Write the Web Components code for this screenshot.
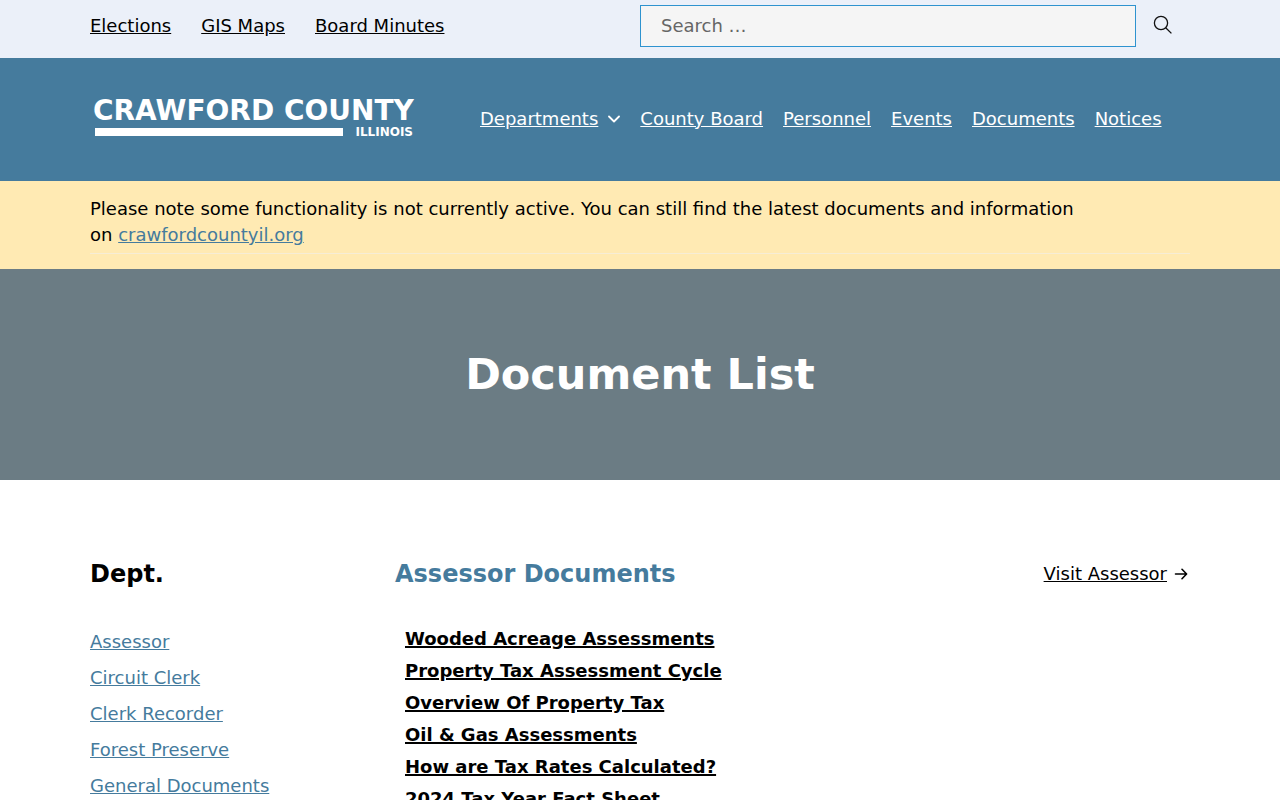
<!DOCTYPE html>
<html lang="en">
<head>
<meta charset="utf-8">
<meta name="viewport" content="width=device-width, initial-scale=1">
<title>Document List - Crawford County</title>
<style>
  body { margin: 0; font: 18px/26px "DejaVu Sans", sans-serif; color: #000; background: #fff; --brand: #457b9d; }
</style>
</head>
<body>
<county-page></county-page>

<script>
const define = (name, markup) => {
  const template = document.createElement('template');
  template.innerHTML = markup;
  customElements.define(name, class extends HTMLElement {
    constructor() {
      super();
      this.attachShadow({ mode: 'open' }).append(template.content.cloneNode(true));
    }
  });
};

define('page-container', `
<style>
  :host { display: block; max-width: 1100px; margin: 0 auto; }
</style>
<slot></slot>`);

define('search-box', `
<style>
  :host { display: block; }
  form { display: flex; align-items: center; margin: 0; }
  label { flex: 1; display: flex; }
  input { flex: 1; min-width: 0; box-sizing: border-box; height: 42px; padding: 0 20px 2px; border: 1px solid #2e93cf; border-radius: 0; background: #f5f5f5; font: inherit; color: #000; outline: none; }
  input::placeholder { color: #666; opacity: 1; }
  button { display: flex; justify-content: center; align-items: center; width: 54px; height: 42px; padding: 0 0 2px; border: 0; background: none; color: #111; }
</style>
<form role="search" onsubmit="return false">
  <label><input type="search" placeholder="Search …" aria-label="Search for"></label>
  <button type="submit" aria-label="Search">
    <svg width="20" height="20" viewBox="0 0 20 20" fill="none" stroke="currentColor" stroke-width="1.3"><circle cx="8" cy="8" r="6.6"/><path d="M12.7 12.7 18.4 18.4"/></svg>
  </button>
</form>`);

define('top-bar', `
<style>
  :host { display: block; background: #ebf0f9; }
  .row { display: grid; grid-template-columns: 1fr 1fr; align-items: center; padding: 5px 0 11px; }
  nav { display: flex; gap: 30px; }
  a { color: #000; white-space: nowrap; }
</style>
<page-container><div class="row">
  <nav aria-label="Quick links"><a href="#">Elections</a><a href="#">GIS Maps</a><a href="#">Board Minutes</a></nav>
  <search-box></search-box>
</div></page-container>`);

define('county-logo', `
<style>
  :host { display: block; }
  a { display: block; width: 330px; color: #fff; }
  svg { display: block; width: 100%; }
  text { font-family: "DejaVu Sans", sans-serif; font-weight: 700; }
</style>
<a href="#" aria-label="Crawford County Illinois">
  <svg viewBox="0 0 330 61" fill="currentColor">
    <text x="3" y="32" font-size="28">CRAWFORD COUNTY</text>
    <rect x="5" y="40" width="248" height="8"/>
    <text x="323" y="48" font-size="12" text-anchor="end">ILLINOIS</text>
  </svg>
</a>`);

define('site-header', `
<style>
  :host { display: block; background: var(--brand); }
  .row { display: flex; align-items: center; gap: 60px; padding: 30px 0 32px; }
  nav { display: flex; gap: 20px; }
  a { color: #fff; white-space: nowrap; }
  .parent { display: flex; align-items: center; gap: 10px; color: #fff; }
</style>
<page-container><div class="row">
  <county-logo></county-logo>
  <nav aria-label="Primary">
    <span class="parent"><a href="#">Departments</a><svg width="12" height="8" viewBox="0 0 12 8" fill="none" stroke="currentColor" stroke-width="1.8" stroke-linecap="round" stroke-linejoin="round"><path d="M1 1.5 6 6.5 11 1.5"/></svg></span>
    <a href="#">County Board</a><a href="#">Personnel</a><a href="#">Events</a><a href="#">Documents</a><a href="#">Notices</a>
  </nav>
</div></page-container>`);

define('site-notice', `
<style>
  :host { display: block; background: #ffeab3; padding: 15px 0; }
  .text { padding-bottom: 5px; border-bottom: 1px solid #f6edd6; }
  p { margin: 0; max-width: 1000px; }
  ::slotted(a) { color: var(--brand); }
</style>
<page-container><div class="text"><p><slot></slot></p></div></page-container>`);

define('page-hero', `
<style>
  :host { display: block; background: #6b7c84; color: #fff; padding: 80px 0; text-align: center; }
  h1 { margin: 0; font-size: 43px; line-height: 51px; font-weight: 700; }
</style>
<h1><slot></slot></h1>`);

define('department-list', `
<style>
  :host { display: block; }
  h2 { margin: 0 0 41px; font-size: 24px; line-height: 28px; }
  ul { margin: 0; padding: 0; list-style: none; display: grid; gap: 10px; }
  a { color: var(--brand); }
</style>
<h2>Dept.</h2>
<ul>
  <li><a href="#">Assessor</a></li>
  <li><a href="#">Circuit Clerk</a></li>
  <li><a href="#">Clerk Recorder</a></li>
  <li><a href="#">Forest Preserve</a></li>
  <li><a href="#">General Documents</a></li>
</ul>`);

define('document-group', `
<style>
  :host { display: block; }
  header { display: flex; justify-content: space-between; align-items: center; margin-bottom: 35px; }
  h2 { margin: 0; font-size: 24px; line-height: 28px; color: var(--brand); }
  .visit { display: flex; align-items: center; gap: 7px; padding-right: 2px; }
  a { color: #000; }
  ul { margin: 0; padding: 0 10px; list-style: none; font-weight: 700; line-height: 32px; }
  ul a { text-decoration-thickness: 2px; }
</style>
<header>
  <h2>Assessor Documents</h2>
  <span class="visit"><a href="#">Visit Assessor</a><svg width="14" height="12" viewBox="0 0 14 12" fill="none" stroke="#000" stroke-width="1.6" stroke-linecap="round" stroke-linejoin="round"><path d="M1.5 6H12.5M8 1.3 12.6 6 8 10.7"/></svg></span>
</header>
<ul>
  <li><a href="#">Wooded Acreage Assessments</a></li>
  <li><a href="#">Property Tax Assessment Cycle</a></li>
  <li><a href="#">Overview Of Property Tax</a></li>
  <li><a href="#">Oil &amp; Gas Assessments</a></li>
  <li><a href="#">How are Tax Rates Calculated?</a></li>
  <li><a href="#">2024 Tax Year Fact Sheet</a></li>
</ul>`);

define('county-page', `
<style>
  :host { display: block; height: 100vh; overflow: hidden auto; scrollbar-width: none; }
  main { display: grid; grid-template-columns: 265px 1fr; gap: 40px; padding-top: 80px; }
</style>
<top-bar></top-bar>
<site-header></site-header>
<site-notice>Please note some functionality is not currently active. You can still find the latest documents and information on <a href="#">crawfordcountyil.org</a></site-notice>
<page-hero>Document List</page-hero>
<page-container><main>
  <department-list></department-list>
  <document-group></document-group>
</main></page-container>`);
</script>
</body>
</html>
